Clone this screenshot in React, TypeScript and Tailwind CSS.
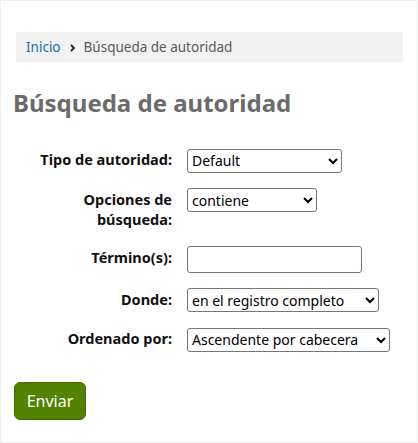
import React, { useState } from "react";

type Row = {
  label: string[];
  control: React.ReactNode;
};

const selectCls =
  "h-[24px] border border-[#767676] rounded-[3px] bg-white text-[14px] text-black";

const App: React.FC = () => {
  const [term, setTerm] = useState("");

  const rows: Row[] = [
    {
      label: ["Tipo de autoridad:"],
      control: (
        <select className={selectCls + " w-[155px]"} defaultValue="Default">
          <option>Default</option>
        </select>
      ),
    },
    {
      label: ["Opciones de", "búsqueda:"],
      control: (
        <select className={selectCls + " w-[130px]"} defaultValue="contiene">
          <option>contiene</option>
        </select>
      ),
    },
    {
      label: ["Término(s):"],
      control: (
        <input
          type="text"
          value={term}
          onChange={(e) => setTerm(e.target.value)}
          className="h-[27px] w-[175px] border border-[#767676] rounded-[3px] bg-white px-1 text-[14px]"
        />
      ),
    },
    {
      label: ["Donde:"],
      control: (
        <select className={selectCls + " w-[192px]"} defaultValue="full">
          <option value="full">en el registro completo</option>
        </select>
      ),
    },
    {
      label: ["Ordenado por:"],
      control: (
        <select className={selectCls + " w-[203px]"} defaultValue="asc">
          <option value="asc">Ascendente por cabecera</option>
        </select>
      ),
    },
  ];

  return (
    <div
      className="min-h-screen bg-[#eef0f0] p-px"
      style={{ fontFamily: '"Noto Sans", "Open Sans", sans-serif' }}
    >
      <div className="h-[441px] bg-white px-[12px] pt-[31px]">
        {/* breadcrumb */}
        <div className="ml-[3px] mr-[2px] flex h-[30px] items-center bg-[#f2f2f2] pl-[10px] text-[13.5px]">
          <a href="#" className="text-[#1a6ea0]">
            Inicio
          </a>
          <svg width="5" height="8" viewBox="0 0 5 8" className="mx-[9px] mt-[1px]">
            <path d="M1 1 L4 4 L1 7" fill="none" stroke="#222" strokeWidth="1.8" />
          </svg>
          <span className="text-[#595959]">Búsqueda de autoridad</span>
        </div>

        <h1 className="mt-[25px] text-[24px] font-bold leading-[32px] text-[#6b6b6b]">
          Búsqueda de autoridad
        </h1>

        <form className="mt-[29px]" onSubmit={(e) => e.preventDefault()}>
          {rows.map((row, i) => (
            <div key={i} className="mb-[15px] flex items-start">
              <label className="w-[159px] pt-[1px] pb-[2px] text-right text-[14.5px] font-bold leading-[20px] text-[#111]">
                {row.label.map((l, j) => (
                  <div key={j}>{l}</div>
                ))}
              </label>
              <div className="ml-[15px]">{row.control}</div>
            </div>
          ))}

          <button
            type="submit"
            className="mt-[15px] ml-px h-[38px] w-[72px] rounded-[6px] border border-[#436900] bg-[#538200] text-[16px] text-white"
          >
            Enviar
          </button>
        </form>
      </div>
    </div>
  );
};

export default App;
